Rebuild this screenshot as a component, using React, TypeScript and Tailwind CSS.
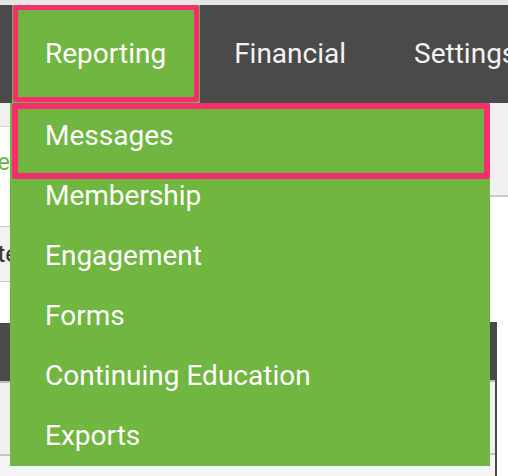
import React from "react";

const items = ["Messages", "Membership", "Engagement", "Forms", "Continuing Education", "Exports"];

export default function App() {
  return (
    <div className="relative w-[508px] h-[476px] overflow-hidden bg-[#f5f5f5] font-['Roboto','Liberation_Sans',sans-serif]">
      <div className="h-[5px] bg-[#e6e6e6]" />
      <nav className="h-[98px] bg-[#4a4a4a] flex items-stretch text-[28px] whitespace-nowrap">
        <div className="w-[12px] shrink-0" />
        <div className="relative shrink-0 bg-[#72b642] text-white flex items-center pl-[33px] pr-[34px]">
          Reporting
          <div className="absolute left-[1px] top-0 right-[1px] bottom-[1px] border-[5px] border-[#fb2d6c] rounded-[3px]" />
        </div>
        <div className="shrink-0 text-[#f2f2f2] flex items-center pl-[34px] pr-[35px]">Financial</div>
        <div className="shrink-0 text-[#f2f2f2] flex items-center px-[33px]">Settings</div>
      </nav>

      <div className="flex h-[373px]">
        <div className="w-[10px] shrink-0 flex flex-col overflow-hidden">
          <div className="h-[24px] bg-[#f0f0f0] border-b border-[#d0d0d0]" />
          <div className="h-[99px] bg-white flex items-start justify-end pt-[17px]">
            <span className="text-[24px] text-[#72b642] whitespace-nowrap">Save</span>
          </div>
          <div className="h-[56px] bg-[#f2f2f2] border-y border-[#c8c8c8] flex items-center justify-end">
            <span className="text-[24px] text-[#333333] whitespace-nowrap mr-[-8px]">Date</span>
          </div>
          <div className="h-[41px] bg-white" />
          <div className="h-[58px] bg-[#4a4a4a]" />
          <div className="h-[75px] bg-[#f0f0f0] border-y-2 border-t-[#bdbdbd] border-b-[#c4c4c4]" />
          <div className="flex-1 bg-[#f5f5f5]" />
        </div>
        <div className="flex-1" />
        <div className="w-[18px] shrink-0 flex flex-col">
          <div className="h-[94px] bg-[#f0f0f0] border-b-2 border-[#cccccc]" />
          <div className="h-[125px] bg-white" />
          <div className="flex-1 flex bg-white">
            <div className="w-[7px] flex flex-col">
              <div className="h-[58px] bg-[#4a4a4a]" />
              <div className="flex-1 flex flex-col border-r-2 border-[#4a4a4a]">
                <div className="h-[75px] bg-[#f0f0f0] border-y-2 border-t-[#bdbdbd] border-b-[#c4c4c4]" />
                <div className="flex-1 bg-[#f5f5f5]" />
              </div>
            </div>
            <div className="flex-1" />
          </div>
        </div>
      </div>

      <div className="absolute left-[10px] top-[103px] w-[480px] bg-[#72b642] pt-[3px]">
        {items.map((it) => (
          <div key={it} className="h-[60px] flex items-center pl-[35px] text-[28px] text-white whitespace-nowrap">
            {it}
          </div>
        ))}
        <div className="absolute left-[2px] top-0 w-[478px] h-[76px] border-[6px] border-[#fb2d6c] rounded-[3px]" />
      </div>
    </div>
  );
}
